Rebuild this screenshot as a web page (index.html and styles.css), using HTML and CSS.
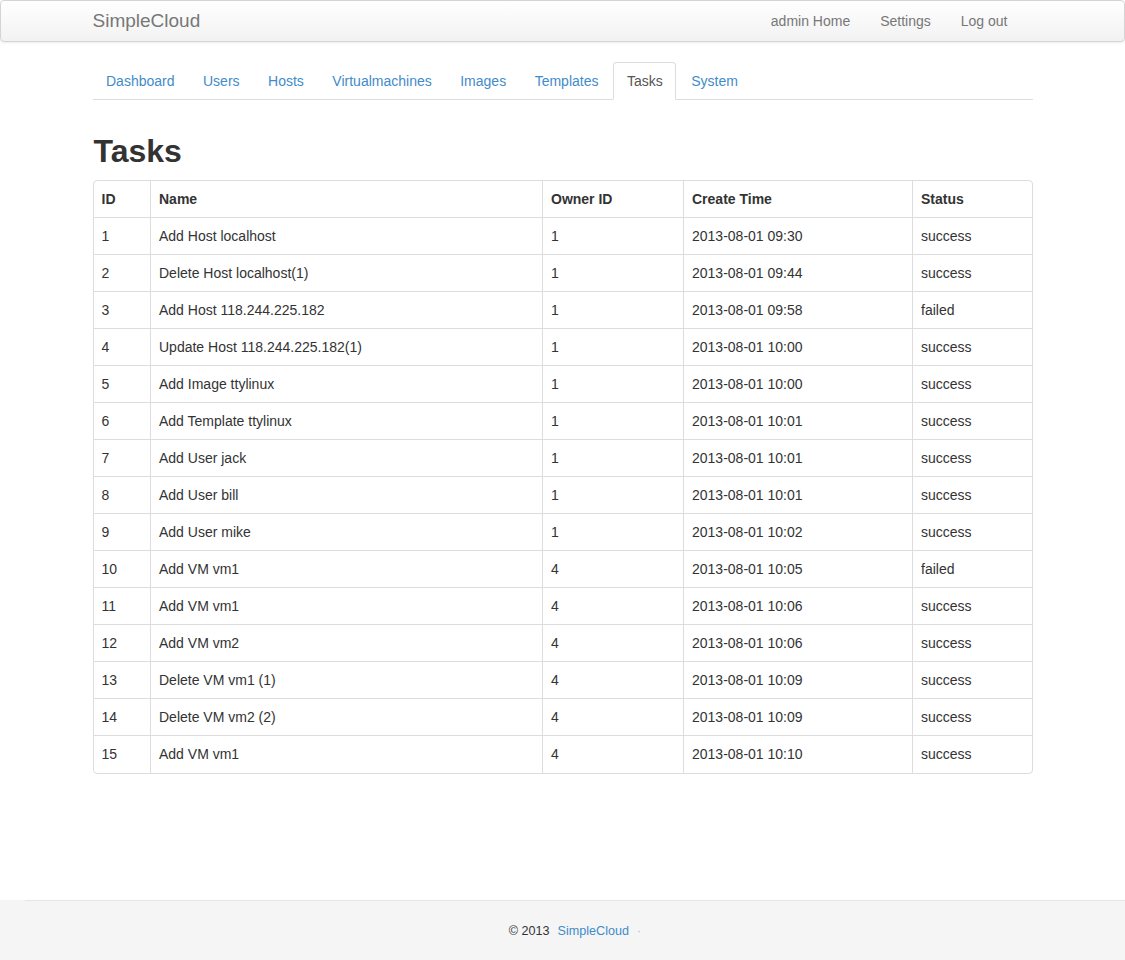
FILE: index.html
```html
<!DOCTYPE html>
<html>
<head>
<meta charset="utf-8">
<title>SimpleCloud - Tasks</title>
<link rel="stylesheet" href="styles.css">
</head>
<body>
<div class="page">
  <header class="navbar">
    <div class="container navbar-inner">
      <a class="brand" href="#">SimpleCloud</a>
      <ul class="navbar-links">
        <li><a href="#">admin Home</a></li>
        <li><a href="#">Settings</a></li>
        <li><a href="#">Log out</a></li>
      </ul>
    </div>
  </header>

  <main class="container main">
    <ul class="tabs">
      <li><a href="#">Dashboard</a></li>
      <li><a href="#">Users</a></li>
      <li><a href="#">Hosts</a></li>
      <li><a href="#">Virtualmachines</a></li>
      <li><a href="#">Images</a></li>
      <li><a href="#">Templates</a></li>
      <li class="active"><a href="#">Tasks</a></li>
      <li><a href="#">System</a></li>
    </ul>

    <h1 class="title">Tasks</h1>

    <div class="table-wrap">
      <table class="tasks">
        <colgroup>
          <col class="c-id"><col class="c-name"><col class="c-owner"><col class="c-time"><col class="c-status">
        </colgroup>
        <thead>
          <tr><th>ID</th><th>Name</th><th>Owner ID</th><th>Create Time</th><th>Status</th></tr>
        </thead>
        <tbody>
          <tr><td>1</td><td>Add Host localhost</td><td>1</td><td>2013-08-01 09:30</td><td>success</td></tr>
          <tr><td>2</td><td>Delete Host localhost(1)</td><td>1</td><td>2013-08-01 09:44</td><td>success</td></tr>
          <tr><td>3</td><td>Add Host 118.244.225.182</td><td>1</td><td>2013-08-01 09:58</td><td>failed</td></tr>
          <tr><td>4</td><td>Update Host 118.244.225.182(1)</td><td>1</td><td>2013-08-01 10:00</td><td>success</td></tr>
          <tr><td>5</td><td>Add Image ttylinux</td><td>1</td><td>2013-08-01 10:00</td><td>success</td></tr>
          <tr><td>6</td><td>Add Template ttylinux</td><td>1</td><td>2013-08-01 10:01</td><td>success</td></tr>
          <tr><td>7</td><td>Add User jack</td><td>1</td><td>2013-08-01 10:01</td><td>success</td></tr>
          <tr><td>8</td><td>Add User bill</td><td>1</td><td>2013-08-01 10:01</td><td>success</td></tr>
          <tr><td>9</td><td>Add User mike</td><td>1</td><td>2013-08-01 10:02</td><td>success</td></tr>
          <tr><td>10</td><td>Add VM vm1</td><td>4</td><td>2013-08-01 10:05</td><td>failed</td></tr>
          <tr><td>11</td><td>Add VM vm1</td><td>4</td><td>2013-08-01 10:06</td><td>success</td></tr>
          <tr><td>12</td><td>Add VM vm2</td><td>4</td><td>2013-08-01 10:06</td><td>success</td></tr>
          <tr><td>13</td><td>Delete VM vm1 (1)</td><td>4</td><td>2013-08-01 10:09</td><td>success</td></tr>
          <tr><td>14</td><td>Delete VM vm2 (2)</td><td>4</td><td>2013-08-01 10:09</td><td>success</td></tr>
          <tr><td>15</td><td>Add VM vm1</td><td>4</td><td>2013-08-01 10:10</td><td>success</td></tr>
        </tbody>
      </table>
    </div>
  </main>

  <footer class="footer">
    <div class="footer-inner">
      <span class="copy">&copy; 2013</span>
      <a class="footer-link" href="#">SimpleCloud</a>
      <span class="sep">&middot;</span>
    </div>
  </footer>
</div>
</body>
</html>
```
FILE: styles.css
```css
* { box-sizing: border-box; }

html, body {
  margin: 0;
  padding: 0;
}

body {
  font-family: "Liberation Sans", Arial, Helvetica, sans-serif;
  font-size: 14px;
  line-height: 20px;
  color: #333;
  background: #fff;
}

a { text-decoration: none; }

.page {
  min-height: 960px;
  display: flex;
  flex-direction: column;
}

.container {
  width: 940px;
  margin: 0 auto;
}

/* Navbar */
.navbar {
  height: 42px;
  border: 1px solid #d4d4d4;
  border-radius: 4px;
  background: linear-gradient(to bottom, #ffffff 0%, #f2f2f2 100%);
  box-shadow: 0 1px 3px rgba(0, 0, 0, 0.08);
}

.navbar-inner {
  display: flex;
  align-items: center;
  justify-content: space-between;
  height: 40px;
}

.brand {
  font-size: 19px;
  color: #777;
  line-height: 40px;
}

.navbar-links {
  list-style: none;
  margin: 0 10px 0 0;
  padding: 0;
  display: flex;
}

.navbar-links a {
  display: block;
  padding: 0 15px;
  line-height: 40px;
  color: #777;
}

/* Tabs */
.main {
  flex: 1;
  padding-top: 20px;
}

.tabs {
  list-style: none;
  margin: 0;
  padding: 0;
  display: flex;
  border-bottom: 1px solid #ddd;
  height: 38px;
}

.tabs li {
  margin-right: 2px;
  margin-bottom: -1px;
}

.tabs a {
  display: block;
  height: 38px;
  line-height: 36px;
  padding: 0 12px 0 12.5px;
  border: 1px solid transparent;
  border-radius: 4px 4px 0 0;
  color: #428bca;
}

.tabs li.active a {
  color: #555;
  background: #fff;
  border-color: #ddd #ddd transparent #ddd;
}

/* Title */
.title {
  font-size: 32px;
  font-weight: bold;
  line-height: 34px;
  margin: 34px 0 12px 1px;
  color: #333;
}

/* Table */
.table-wrap {
  border: 1px solid #ddd;
  border-radius: 4px;
  overflow: hidden;
}

.tasks {
  width: 100%;
  border-collapse: collapse;
  table-layout: fixed;
}

.c-id { width: 57px; }
.c-name { width: 392px; }
.c-owner { width: 141px; }
.c-time { width: 229px; }

.tasks th,
.tasks td {
  height: 37px;
  padding: 8px 8px;
  text-align: left;
  vertical-align: middle;
  line-height: 20px;
  border-left: 1px solid #ddd;
  border-top: 1px solid #ddd;
  white-space: nowrap;
}

.tasks th:first-child,
.tasks td:first-child { border-left: none; }

.tasks thead th {
  border-top: none;
  font-weight: bold;
  height: 36px;
}

/* Footer */
.footer {
  height: 60px;
  background: #f5f5f5;
  padding-left: 25px;
}

.footer-inner {
  height: 60px;
  border-top: 1px solid #e5e5e5;
  display: flex;
  align-items: center;
  justify-content: center;
  font-size: 12.6px;
  color: #333;
  padding-top: 1px;
}

.copy { margin-right: 8px; }

.footer-link {
  color: #428bca;
  margin-right: 8px;
}

.sep { color: #bbb; }
```
